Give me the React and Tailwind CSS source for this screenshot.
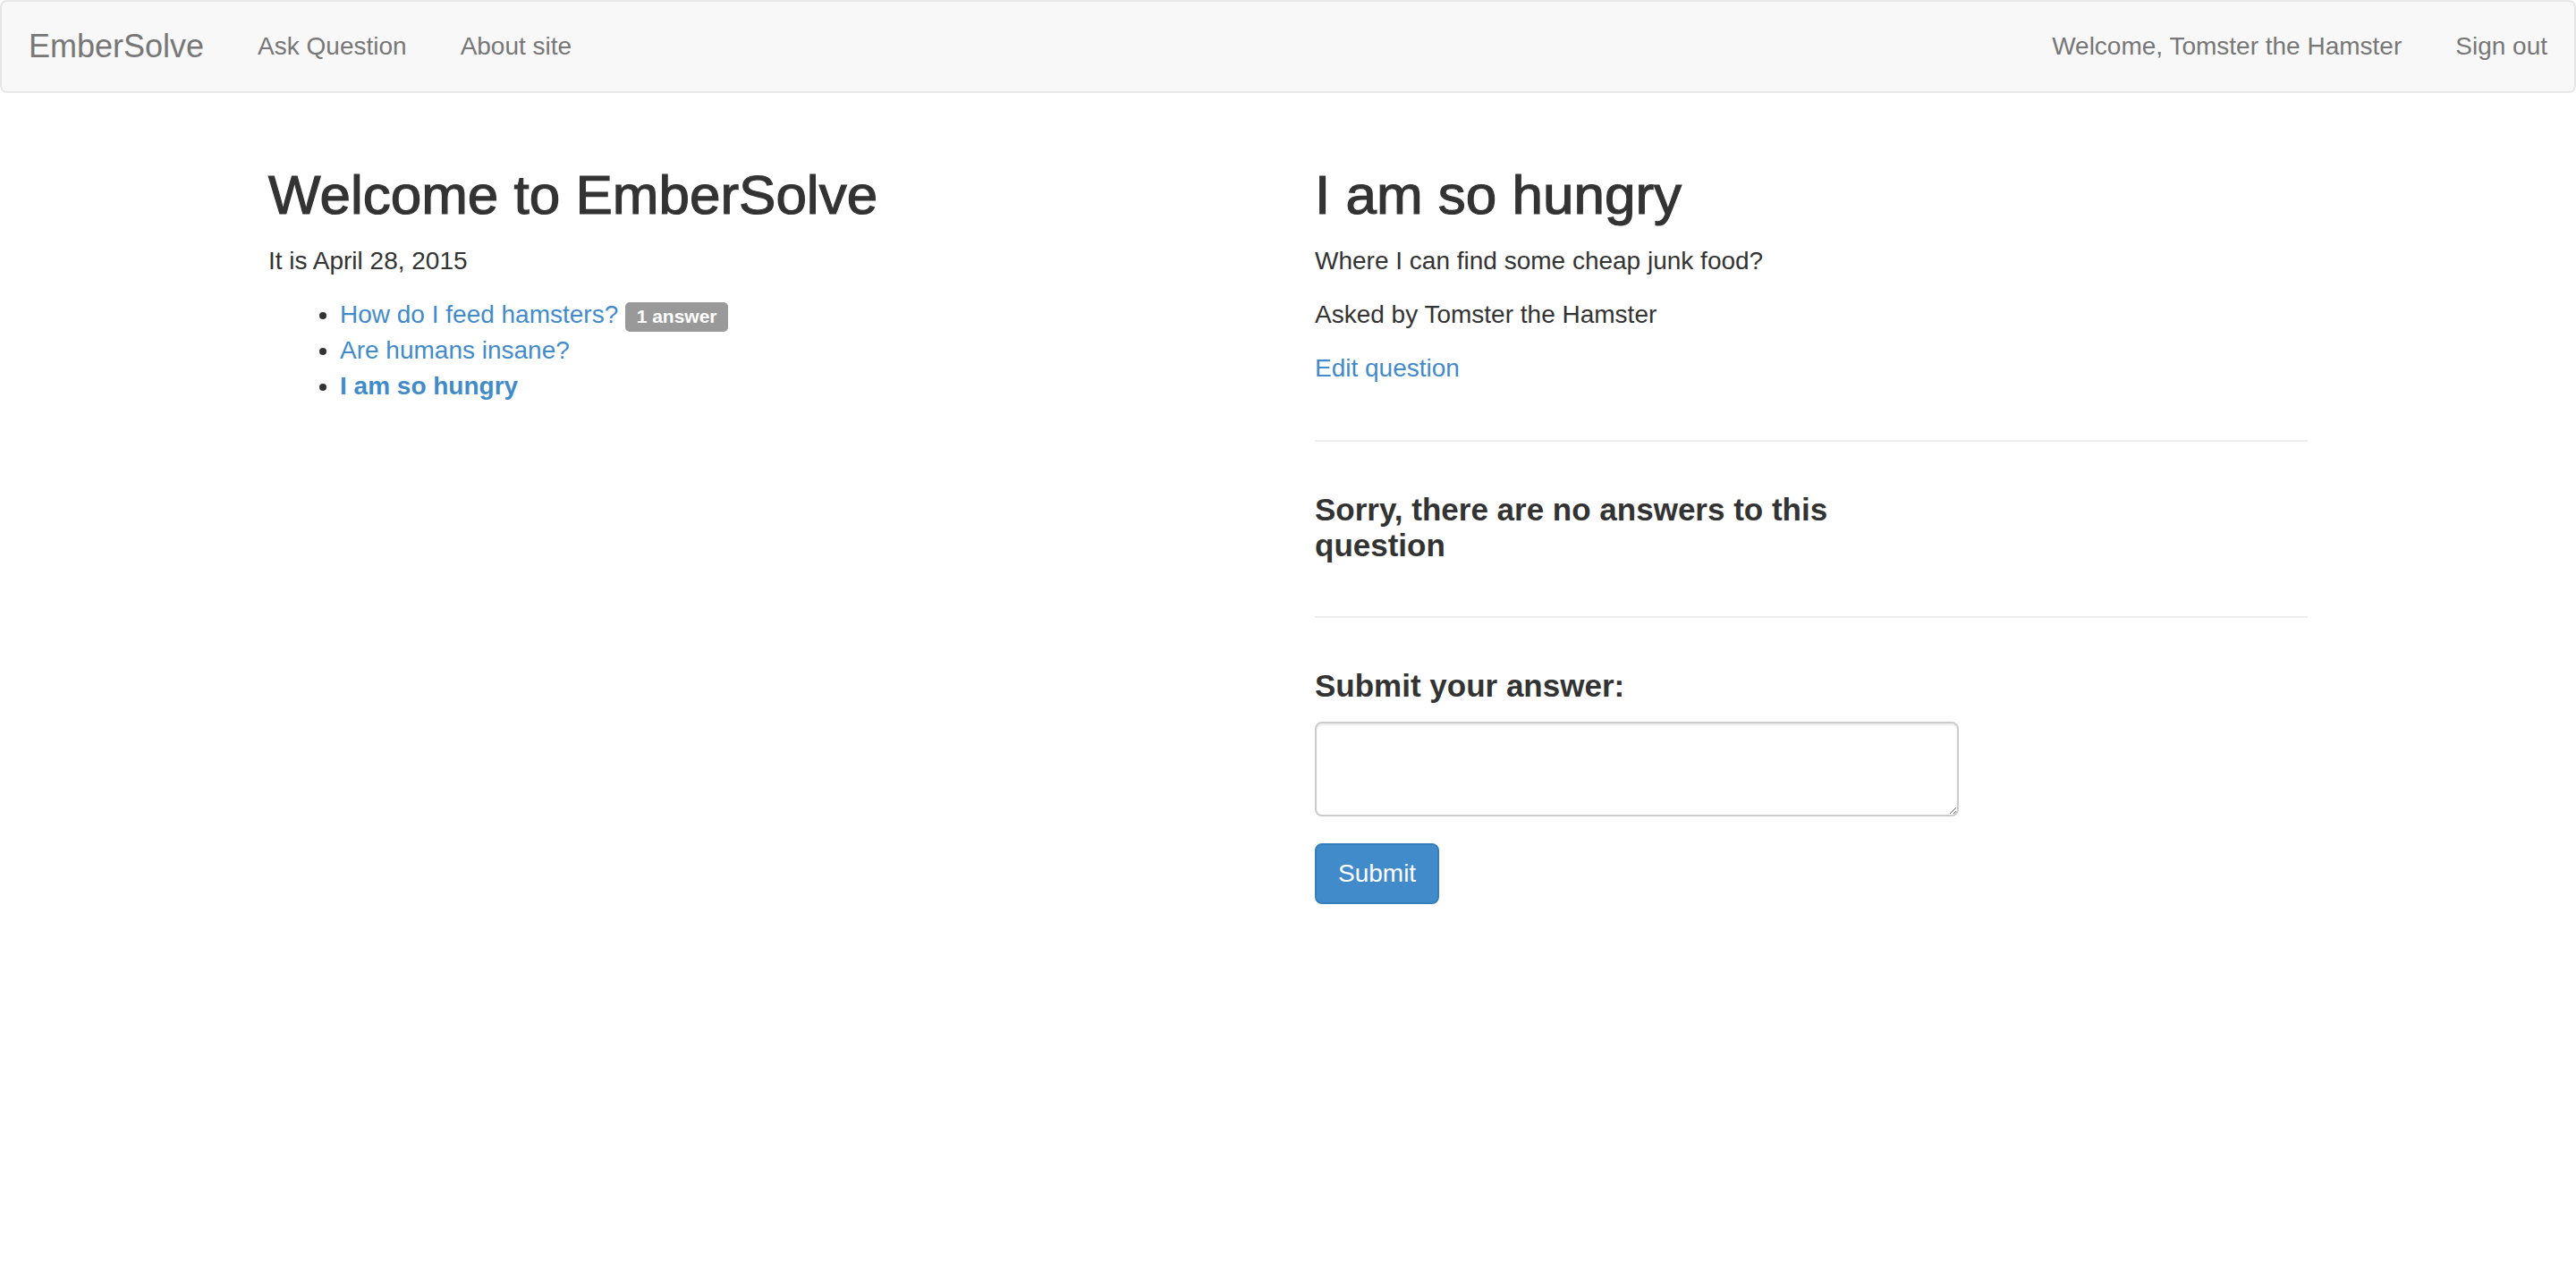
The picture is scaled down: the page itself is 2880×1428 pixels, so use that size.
export default function App() {
  const link = "text-[#428bca] no-underline";
  return (
    <div className="min-h-[1428px] bg-white font-['Liberation_Sans',Arial,sans-serif] text-[28px] leading-[40px] text-[#333]">
      <nav className="mb-[40px] flex h-[104px] items-start justify-between rounded-[8px] border-2 border-[#e7e7e7] bg-[#f8f8f8] px-[30px]">
        <div className="flex">
          <a href="#" className="-ml-[30px] block h-[100px] px-[30px] py-[30px] text-[36px] leading-[40px] text-[#777]">
            EmberSolve
          </a>
          <ul className="flex">
            <li>
              <a href="#" className="block px-[30px] py-[30px] text-[#777]">Ask Question</a>
            </li>
            <li>
              <a href="#" className="block px-[30px] py-[30px] text-[#777]">About site</a>
            </li>
          </ul>
        </div>
        <ul className="-mr-[30px] flex">
          <li>
            <a href="#" className="block px-[30px] py-[30px] text-[#777]">Welcome, Tomster the Hamster</a>
          </li>
          <li>
            <a href="#" className="block px-[30px] py-[30px] text-[#777]">Sign out</a>
          </li>
        </ul>
      </nav>

      <div className="mx-auto w-[2340px] px-[30px]">
        <div className="-mx-[30px] flex items-start">
          <div className="flow-root w-1/2 px-[30px]">
            <h1 className="mt-[40px] mb-[20px] text-[62px] leading-[1.1] [-webkit-text-stroke:1.2px_#333]">
              Welcome to EmberSolve
            </h1>
            <p className="mb-[20px]">It is April 28, 2015</p>
            <ul className="mb-[20px] list-disc pl-[80px]">
              <li>
                <a href="#" className={link}>How do I feed hamsters?</a>{" "}
                <span className="rounded-[5px] bg-[#999] px-[12.6px] pt-[4.2px] pb-[6.3px] text-[21px] font-bold leading-none text-white">
                  1 answer
                </span>
              </li>
              <li>
                <a href="#" className={link}>Are humans insane?</a>
              </li>
              <li>
                <a href="#" className={link + " font-bold"}>I am so hungry</a>
              </li>
            </ul>
          </div>

          <div className="flow-root w-1/2 px-[30px]">
            <h1 className="mt-[40px] mb-[20px] text-[62px] leading-[1.1] [-webkit-text-stroke:1.2px_#333]">
              I am so hungry
            </h1>
            <p className="mb-[20px]">Where I can find some cheap junk food?</p>
            <p className="mb-[20px]">Asked by Tomster the Hamster</p>
            <div className="flow-root">
              <p className="mb-[20px]">
                <a href="#" className={link}>Edit question</a>
              </p>
            </div>
            <hr className="my-[40px] border-0 border-t-2 border-[#eeeeee]" />
            <div className="flow-root w-[720px]">
              <h4 className="mt-[16px] mb-[20px] text-[35px] font-bold leading-[39.6px]">
                Sorry, there are no answers to this question
              </h4>
            </div>
            <hr className="mt-[40px] mb-[40px] border-0 border-t-2 border-[#eeeeee]" />
            <div className="flow-root w-[720px]">
              <h4 className="mt-[16px] mb-[20px] text-[35px] font-bold leading-[39.6px]">
                Submit your answer:
              </h4>
              <div className="mb-[30px]">
                <textarea
                  rows={2}
                  className="block h-[106px] w-full rounded-[8px] border-2 border-[#cccccc] bg-white px-[24px] py-[12px] text-[28px] leading-[40px] text-[#555] shadow-[inset_0_2px_2px_rgba(0,0,0,0.075)] outline-none"
                />
              </div>
              <button
                type="button"
                className="rounded-[8px] border-2 border-[#357ebd] bg-[#428bca] px-[24px] py-[12px] text-[28px] leading-[40px] text-white"
              >
                Submit
              </button>
            </div>
          </div>
        </div>
      </div>
    </div>
  );
}
